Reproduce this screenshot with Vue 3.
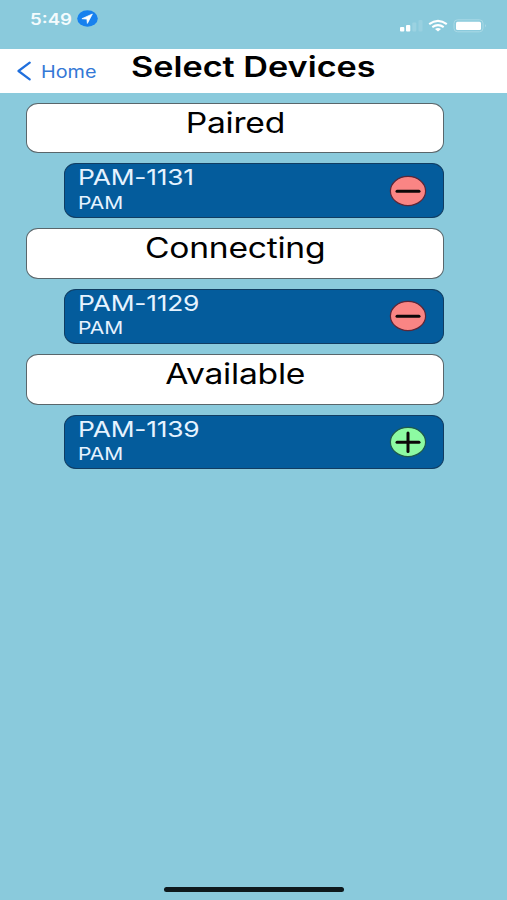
<script setup>
const sections = [
  { title: 'Paired', device: 'PAM-1131', action: 'remove' },
  { title: 'Connecting', device: 'PAM-1129', action: 'remove' },
  { title: 'Available', device: 'PAM-1139', action: 'add' },
]
</script>

<template>
  <div class="screen">
    <div class="status">
      <span class="time">5:49</span>
      <svg class="location" width="21" height="17" viewBox="0 0 21 17">
        <ellipse cx="10.5" cy="8.5" rx="10.3" ry="8.3" fill="#1781ee" />
        <path d="M15.4 4 4.9 8.7l5 .4.5 4.3z" fill="#fff" stroke="#fff" stroke-width=".7" stroke-linejoin="round" />
      </svg>
      <svg class="signals" width="88" height="18" viewBox="0 0 88 18">
        <rect x="1" y="10" width="4.3" height="4.6" rx="1" fill="#fff" />
        <rect x="7" y="8" width="4.3" height="6.6" rx="1" fill="#fff" />
        <rect x="13.3" y="5.5" width="4" height="9.1" rx="1" fill="#9bd2e1" />
        <rect x="19.5" y="3" width="4" height="11.6" rx="1" fill="#98d0e0" />
        <g fill="none" stroke="#fff" stroke-width="2.1">
          <path d="M30.2 7.1q8.8-6.6 17.6 0" />
          <path d="M33.3 10.1q5.7-4 11.4 0" />
        </g>
        <path d="M36 12q3-2 6 0l-3 2.6z" fill="#fff" />
        <rect x="55" y="2.8" width="29" height="12" rx="3.5" fill="none" stroke="#a9d9e5" stroke-width="1" />
        <rect x="57" y="4.7" width="25" height="8.3" rx="1.5" fill="#fff" />
        <path d="M86 7v3.6q1.6-1.8 0-3.6z" fill="#b5dde8" />
      </svg>
    </div>

    <header class="nav">
      <a class="back">
        <svg width="15" height="20" viewBox="0 0 15 20">
          <path d="M12.7 1.6 1.5 10l11.2 8.4" fill="none" stroke="#1f6fdd" stroke-width="2.2" stroke-linecap="round" stroke-linejoin="round" />
        </svg>
        <span class="back-label">Home</span>
      </a>
      <h1 class="title">Select Devices</h1>
    </header>

    <main class="list">
      <template v-for="section in sections" :key="section.title">
        <h2 class="heading"><span>{{ section.title }}</span></h2>
        <div class="device">
          <div class="info">
            <span class="name">{{ section.device }}</span>
            <span class="kind">PAM</span>
          </div>
          <svg width="38" height="32" viewBox="0 0 38 32">
            <ellipse cx="19" cy="16" rx="17.6" ry="14.6" :class="section.action" stroke-width="1.2" />
            <path d="M8 16.3h22" class="mark" />
            <path v-if="section.action === 'add'" d="M19 7v18.4" class="mark" />
          </svg>
        </div>
      </template>
    </main>

    <div class="home-bar"></div>
  </div>
</template>

<style>
body {
  background: #8acadc;
}
</style>

<style scoped>
.screen {
  display: flex;
  flex-direction: column;
  box-sizing: border-box;
  height: 900px;
  overflow: hidden;
  background: #8acadc;
  font-family: Inter, "Liberation Sans", sans-serif;
}

.status {
  display: flex;
  align-items: flex-start;
  box-sizing: border-box;
  height: 48.5px;
  padding: 10px 20px 0 30px;
}

.time {
  width: 47px;
  font-size: 15.5px;
  font-weight: 600;
  line-height: 19px;
  color: #f4fbfd;
  transform: scaleX(1.2);
  transform-origin: left;
}

.signals {
  margin: 7px 0 0 auto;
}

.nav {
  display: flex;
  align-items: flex-start;
  box-sizing: border-box;
  height: 44.5px;
  background: #fff;
}

.back {
  display: flex;
  align-items: center;
  gap: 9px;
  box-sizing: border-box;
  width: 131px;
  padding: 12px 0 0 17px;
  color: #3478d6;
}

.back-label {
  padding-top: 1px;
  font-size: 17px;
  line-height: 20px;
  transform: scaleX(1.165);
  transform-origin: left;
}

.title {
  margin: 0;
  font-size: 28px;
  font-weight: 600;
  line-height: 37px;
  white-space: nowrap;
  color: #000;
  transform: scaleX(1.222);
  transform-origin: left;
}

.list {
  display: flex;
  flex-direction: column;
  gap: 10px;
  width: 418px;
  margin: 9.7px 0 0 26px;
}

.heading {
  box-sizing: border-box;
  height: 50.8px;
  margin: 0;
  border: 1px solid #59666b;
  border-radius: 12px / 11px;
  background: #fff;
  font-size: 28px;
  font-weight: 400;
  line-height: 39px;
  text-align: center;
  color: #000;
}

.heading span {
  display: inline-block;
  letter-spacing: -0.2px;
  transform: scaleX(1.2);
}

.device {
  display: flex;
  align-items: center;
  justify-content: space-between;
  box-sizing: border-box;
  height: 54.8px;
  margin-left: 38px;
  padding: 0 16px 0 13px;
  border: 1px solid #113d62;
  border-radius: 12px / 11px;
  background: #045c9c;
  color: #e6f3ff;
}

.info {
  display: flex;
  flex-direction: column;
  align-self: flex-start;
  transform: scaleX(1.2);
  transform-origin: left;
}

.name {
  font-size: 22px;
  line-height: 26.4px;
  letter-spacing: -0.2px;
}

.kind {
  font-size: 17.5px;
  line-height: 23px;
}

.remove {
  fill: #fa8584;
  stroke: #5b2638;
}

.add {
  fill: #8dfba2;
  stroke: #1e5a4c;
}

.mark {
  fill: none;
  stroke: #0c0808;
  stroke-width: 3;
  stroke-linecap: round;
}

.home-bar {
  width: 180px;
  height: 5px;
  margin: auto 0 8px 164px;
  border-radius: 3px;
  background: #0e191d;
}
</style>
